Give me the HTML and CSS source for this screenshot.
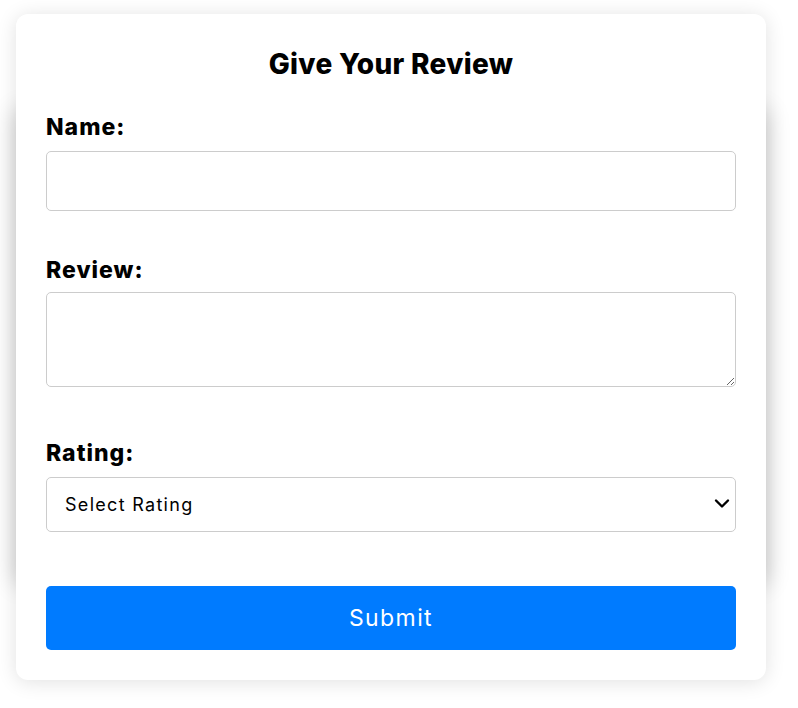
FILE: index.html
```html
<!DOCTYPE html>
<html lang="en">
<head>
<meta charset="utf-8">
<title>Give Your Review</title>
<link rel="stylesheet" href="styles.css">
</head>
<body>
<div class="card">
  <h2 class="title">Give Your Review</h2>
  <form class="form">
    <div class="group group-name">
      <label class="label" for="name">Name:</label>
      <input class="field field-name" id="name" type="text">
    </div>
    <div class="group group-review">
      <label class="label" for="review">Review:</label>
      <textarea class="field field-review" id="review"></textarea>
    </div>
    <div class="group group-rating">
      <label class="label" for="rating">Rating:</label>
      <div class="select-wrap">
        <select class="field field-rating" id="rating">
          <option>Select Rating</option>
          <option>1</option>
          <option>2</option>
          <option>3</option>
          <option>4</option>
          <option>5</option>
        </select>
        <svg class="chevron" width="16" height="12" viewBox="0 0 16 12" aria-hidden="true">
          <path d="M2 2.5 L8 8.5 L14 2.5" fill="none" stroke="#000" stroke-width="2.4" stroke-linecap="round" stroke-linejoin="round"/>
        </svg>
      </div>
    </div>
    <button class="submit" type="button">Submit</button>
  </form>
</div>
</body>
</html>
```
FILE: styles.css
```css
html, body {
  margin: 0;
  padding: 0;
}
body {
  font-family: "Inter", "Noto Sans", sans-serif;
  color: #000;
  padding-bottom: 30px;
}
.card {
  position: relative;
  box-sizing: border-box;
  width: 750px;
  margin: 14px 0 0 16px;
  padding: 30px;
  background: #fff;
  border-radius: 12px;
  box-shadow: 0 2px 20px rgba(0, 0, 0, 0.12);
}
.card::before {
  content: "";
  position: absolute;
  left: 3px;
  right: 3px;
  top: 100px;
  bottom: 100px;
  box-shadow: 0 0 22px 4px rgba(0, 0, 0, 0.2);
  z-index: -1;
}
.title {
  margin: 0;
  font-size: 28px;
  line-height: 40px;
  font-weight: 800;
  letter-spacing: 0.3px;
  text-align: center;
}
.form {
  display: flex;
  flex-direction: column;
}
.group {
  display: flex;
  flex-direction: column;
}
.group-name { margin-top: 28px; }
.group-review { margin-top: 44px; }
.group-rating { margin-top: 51px; }
.label {
  font-size: 23px;
  line-height: 30px;
  font-weight: 800;
  letter-spacing: 1px;
  margin-bottom: 9px;
}
.group-review .label { margin-bottom: 7px; }
.field {
  box-sizing: border-box;
  width: 100%;
  border: 1px solid #cccccc;
  border-radius: 5px;
  font-family: inherit;
  font-size: 18px;
  letter-spacing: 1.3px;
  background: #fff;
  color: #000;
  margin: 0;
}
.field-name { height: 60px; padding: 0 18px; }
.field-review { height: 95px; padding: 10px 18px; display: block; }
.select-wrap {
  position: relative;
}
.field-rating {
  display: block;
  height: 55px;
  padding: 0 40px 0 18px;
  appearance: none;
  -webkit-appearance: none;
}
.chevron {
  position: absolute;
  right: 6px;
  top: 21px;
  pointer-events: none;
}
.submit {
  margin-top: 54px;
  height: 64px;
  width: 100%;
  border: none;
  border-radius: 5px;
  background: #007bff;
  color: #fff;
  font-family: inherit;
  font-size: 23px;
  letter-spacing: 1.4px;
  cursor: pointer;
}
```
